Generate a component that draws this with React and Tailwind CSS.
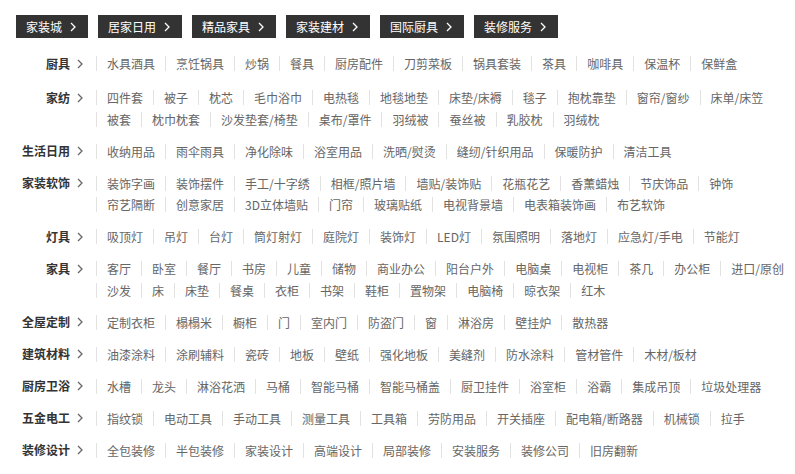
import React from 'react';

const tabs = ['家装城', '居家日用', '精品家具', '家装建材', '国际厨具', '装修服务'];

const categories = [
  { name: '厨具', items: ['水具酒具', '烹饪锅具', '炒锅', '餐具', '厨房配件', '刀剪菜板', '锅具套装', '茶具', '咖啡具', '保温杯', '保鲜盒'] },
  { name: '家纺', items: ['四件套', '被子', '枕芯', '毛巾浴巾', '电热毯', '地毯地垫', '床垫/床褥', '毯子', '抱枕靠垫', '窗帘/窗纱', '床单/床笠', '被套', '枕巾枕套', '沙发垫套/椅垫', '桌布/罩件', '羽绒被', '蚕丝被', '乳胶枕', '羽绒枕'] },
  { name: '生活日用', items: ['收纳用品', '雨伞雨具', '净化除味', '浴室用品', '洗晒/熨烫', '缝纫/针织用品', '保暖防护', '清洁工具'] },
  { name: '家装软饰', items: ['装饰字画', '装饰摆件', '手工/十字绣', '相框/照片墙', '墙贴/装饰贴', '花瓶花艺', '香薰蜡烛', '节庆饰品', '钟饰', '帘艺隔断', '创意家居', '3D立体墙贴', '门帘', '玻璃贴纸', '电视背景墙', '电表箱装饰画', '布艺软饰'] },
  { name: '灯具', items: ['吸顶灯', '吊灯', '台灯', '筒灯射灯', '庭院灯', '装饰灯', 'LED灯', '氛围照明', '落地灯', '应急灯/手电', '节能灯'] },
  { name: '家具', items: ['客厅', '卧室', '餐厅', '书房', '儿童', '储物', '商业办公', '阳台户外', '电脑桌', '电视柜', '茶几', '办公柜', '进口/原创', '沙发', '床', '床垫', '餐桌', '衣柜', '书架', '鞋柜', '置物架', '电脑椅', '晾衣架', '红木'] },
  { name: '全屋定制', items: ['定制衣柜', '榻榻米', '橱柜', '门', '室内门', '防盗门', '窗', '淋浴房', '壁挂炉', '散热器'] },
  { name: '建筑材料', items: ['油漆涂料', '涂刷辅料', '瓷砖', '地板', '壁纸', '强化地板', '美缝剂', '防水涂料', '管材管件', '木材/板材'] },
  { name: '厨房卫浴', items: ['水槽', '龙头', '淋浴花洒', '马桶', '智能马桶', '智能马桶盖', '厨卫挂件', '浴室柜', '浴霸', '集成吊顶', '垃圾处理器'] },
  { name: '五金电工', items: ['指纹锁', '电动工具', '手动工具', '测量工具', '工具箱', '劳防用品', '开关插座', '配电箱/断路器', '机械锁', '拉手'] },
  { name: '装修设计', items: ['全包装修', '半包装修', '家装设计', '高端设计', '局部装修', '安装服务', '装修公司', '旧房翻新'] },
];

const Chevron = ({ className }) => (
  <svg width="6" height="10" viewBox="0 0 6 10" className={className}>
    <polyline points="1,1 5,5 1,9" fill="none" stroke="currentColor" strokeWidth="1.3" />
  </svg>
);

export default function App() {
  return (
    <div className="w-[795px] h-[474px] bg-white overflow-hidden text-[12px]" style={{ fontFamily: '"Microsoft YaHei", "Noto Sans CJK SC", sans-serif' }}>
      <div className="flex gap-[10px] pl-[16px] pt-[15px]">
        {tabs.map((t) => (
          <div key={t} className="flex items-center h-[23px] bg-[#333333] text-white pl-[10px] pr-[12px] leading-[23px]">
            <span>{t}</span>
            <Chevron className="ml-[8px] text-white" />
          </div>
        ))}
      </div>

      <div className="mt-[15px] flex flex-col gap-[11px]">
        {categories.map((c, i) => (
          <div key={c.name} className={i === 0 ? 'flex mb-[2px]' : 'flex'}>
            <div className="w-[83px] shrink-0 flex items-center justify-end h-[21px] text-[#333333] font-bold">
              <span>{c.name}</span>
              <Chevron className="ml-[7px] text-[#666666]" />
            </div>
            <div className="flex-1 flex flex-wrap ml-[13px] gap-y-[0.5px]">
              {c.items.map((it) => (
                <div key={it} className="flex items-center h-[21px] whitespace-nowrap">
                  <span className="w-px h-[15px] bg-[#e2e2e2]" />
                  <span className="pl-[10px] pr-[10px] text-[#666666] leading-[21px]">{it}</span>
                </div>
              ))}
            </div>
          </div>
        ))}
      </div>
    </div>
  );
}
